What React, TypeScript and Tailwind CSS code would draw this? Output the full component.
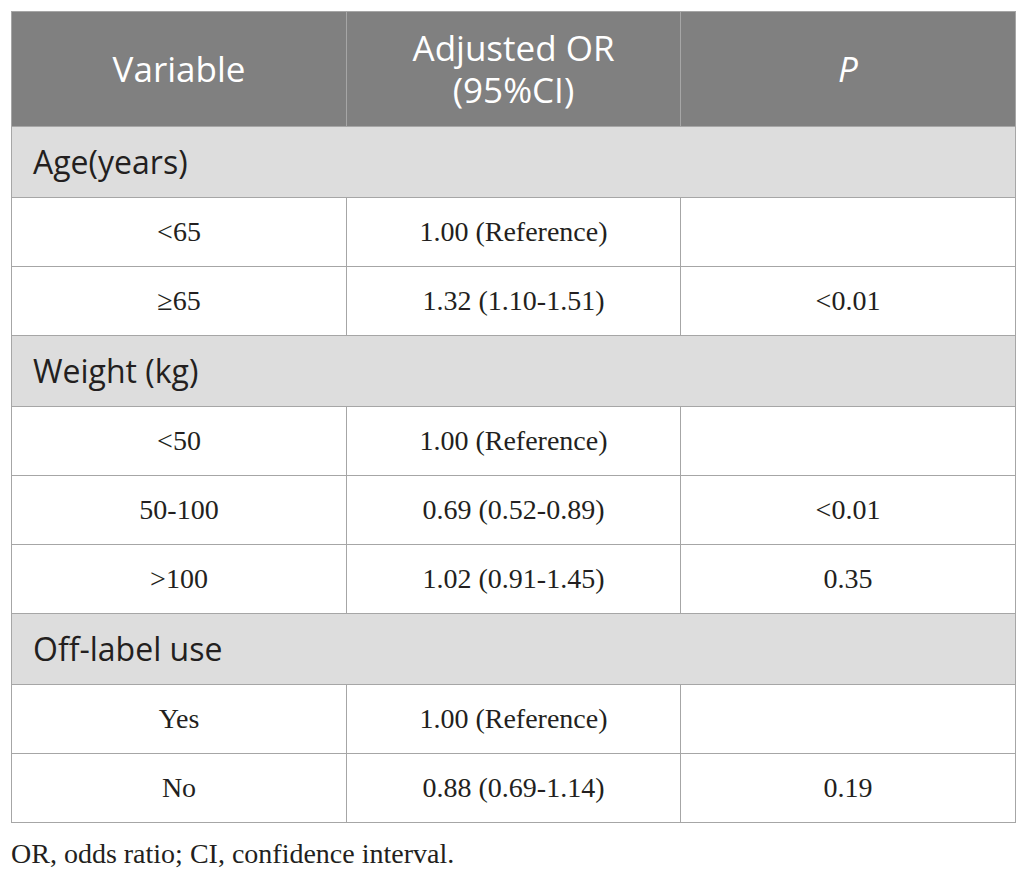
const sans = "font-['Open_Sans',_'Noto_Sans',_sans-serif]";
const serif = "font-['Liberation_Serif',_'Times_New_Roman',_serif]";

type Section = { title: string; rows: [string, string, string][] };

const sections: Section[] = [
  {
    title: 'Age(years)',
    rows: [
      ['<65', '1.00 (Reference)', ''],
      ['≥65', '1.32 (1.10-1.51)', '<0.01'],
    ],
  },
  {
    title: 'Weight (kg)',
    rows: [
      ['<50', '1.00 (Reference)', ''],
      ['50-100', '0.69 (0.52-0.89)', '<0.01'],
      ['>100', '1.02 (0.91-1.45)', '0.35'],
    ],
  },
  {
    title: 'Off-label use',
    rows: [
      ['Yes', '1.00 (Reference)', ''],
      ['No', '0.88 (0.69-1.14)', '0.19'],
    ],
  },
];

export default function App() {
  return (
    <div className="min-h-[875px] w-[1025px] bg-white pt-[11px] pl-[11px]">
      <table className="w-[1004px] table-fixed border-collapse border border-[#a6a6a6]">
        <colgroup>
          <col className="w-[335px]" />
          <col className="w-[334px]" />
          <col className="w-[335px]" />
        </colgroup>
        <thead>
          <tr className={`h-[115px] bg-[#808080] text-[35px] leading-[42px] text-white ${sans}`}>
            <th className="border border-[#a6a6a6] font-normal">Variable</th>
            <th className="border border-[#a6a6a6] font-normal">
              Adjusted OR
              <br />
              (95%CI)
            </th>
            <th className="border border-[#a6a6a6] font-normal italic">P</th>
          </tr>
        </thead>
        <tbody>
          {sections.map((s) => (
            <>
              <tr key={s.title} className="h-[71px] bg-[#dddddd]">
                <td colSpan={3} className={`border border-[#a6a6a6] pl-[21px] text-[32px] text-[#231f20] ${sans}`}>
                  {s.title}
                </td>
              </tr>
              {s.rows.map((r) => (
                <tr key={s.title + r[0]} className={`h-[69px] text-[28px] text-[#231f20] ${serif}`}>
                  {r.map((c, i) => (
                    <td key={i} className="border border-[#a6a6a6] text-center">
                      {c}
                    </td>
                  ))}
                </tr>
              ))}
            </>
          ))}
        </tbody>
      </table>
      <p className={`mt-[10px] text-[28px] text-[#231f20] ${serif}`}>
        OR, odds ratio; CI, confidence interval.
      </p>
    </div>
  );
}
